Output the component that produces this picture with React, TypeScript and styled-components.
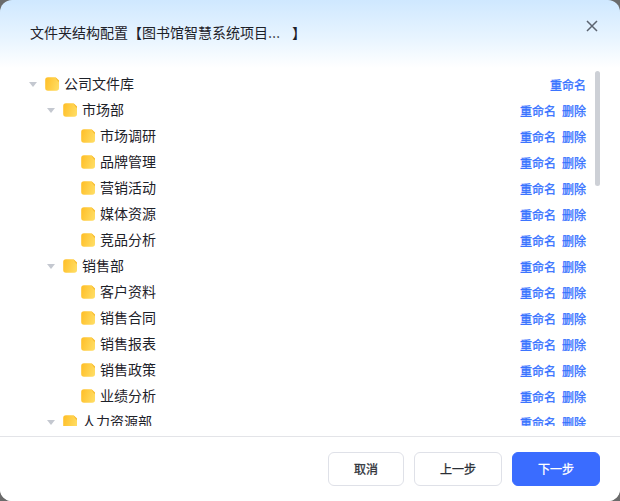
import React from "react";
import styled, { createGlobalStyle } from "styled-components";

const Global = createGlobalStyle`
  html, body { margin: 0; padding: 0; background: #6b6b6b; }
  body { width: 620px; height: 501px; overflow: hidden; font-family: Inter, "Noto Sans CJK SC", sans-serif; }
`;

const Dialog = styled.div`
  width: 620px; height: 501px; border-radius: 12px; overflow: hidden; display: flex; flex-direction: column;
  background: linear-gradient(180deg, #cfe8ff 0px, #e9f5ff 40px, #ffffff 68px);
`;
const Header = styled.div`
  height: 67px; flex: none; display: flex; align-items: flex-start; justify-content: space-between; padding: 23px 20px 0 30px; box-sizing: border-box;
`;
const Title = styled.div`
  font-size: 14px; line-height: 20px; color: #1d2129; font-weight: 400; font-family: Inter, "Noto Sans CJK SC", sans-serif; white-space: pre;
`;
const Close = styled.div`
  width: 16px; height: 16px; color: #5c6470; margin-top: -5px;
`;
const TreeArea = styled.div`
  height: 369px; flex: none; padding: 3px 20px 0 28px; box-sizing: border-box; position: relative; overflow: hidden;
`;
const Clip = styled.div`
  height: 356px; overflow: hidden;
`;
const Row = styled.div<{ $level: number }>`
  height: 26px; display: flex; align-items: center; padding-left: ${p => p.$level * 18}px; padding-right: 14px;
`;
const Caret = styled.div<{ $hidden?: boolean }>`
  width: 0; height: 0; margin: 2px 8px 0 1px; border-left: 4px solid transparent; border-right: 4px solid transparent;
  border-top: 5px solid ${p => (p.$hidden ? "transparent" : "#c4c8d0")};
`;
const FolderIcon = styled.svg`
  flex: none; margin-top: 2px;
`;
const Label = styled.span`
  font-size: 14px; color: #1d2129; margin-left: 5px; flex: 1; font-family: "Noto Sans CJK SC", sans-serif;
`;
const Action = styled.span`
  font-size: 12px; font-weight: 400; -webkit-text-stroke: 0.3px #3370ff; color: #3370ff; margin: 2px 0 0 6px; font-family: "Noto Sans CJK SC", sans-serif;
`;
const Thumb = styled.div`
  position: absolute; right: 20px; top: 4px; width: 5px; height: 115px; border-radius: 3px; background: #cdd0d6;
`;
const Footer = styled.div`
  flex: 1; border-top: 1px solid #e3e4e8; display: flex; justify-content: flex-end; align-items: flex-start; gap: 10px; padding: 15px 20px 0 0; background: #fff;
`;
const Button = styled.button<{ $primary?: boolean; $w: number }>`
  width: ${p => p.$w}px; height: 34px; border-radius: 6px; font-size: 12px; font-weight: 400; cursor: pointer; padding: 0 0 2px;
  font-family: "Noto Sans CJK SC", sans-serif;
  -webkit-text-stroke: 0.3px currentColor;
  border: 1px solid ${p => (p.$primary ? "#3a6cff" : "#dfe1e8")};
  background: ${p => (p.$primary ? "#3a6cff" : "#fff")};
  color: ${p => (p.$primary ? "#fff" : "#2b2f36")};
`;

function Folder() {
  return (
    <FolderIcon width="14" height="14" viewBox="0 0 14 14">
      <defs>
        <linearGradient id="fg" x1="0" y1="0.3" x2="1" y2="0.6">
          <stop offset="0" stopColor="#ffc02a" />
          <stop offset="1" stopColor="#ffdc62" />
        </linearGradient>
      </defs>
      <path d="M3 0.2H10.5L14 3.6V11A2.8 2.8 0 0 1 11.2 13.8H3A2.8 2.8 0 0 1 .2 11V3A2.8 2.8 0 0 1 3 .2Z" fill="url(#fg)" />
      <path d="M10.5 .2L14 3.6V5.2C12.6 4 11.2 2.4 10.5 .2Z" fill="#f7bd36" />
    </FolderIcon>
  );
}

const rows: [number, string, boolean, boolean][] = [
  [0, "公司文件库", true, false],
  [1, "市场部", true, true],
  [2, "市场调研", false, true],
  [2, "品牌管理", false, true],
  [2, "营销活动", false, true],
  [2, "媒体资源", false, true],
  [2, "竞品分析", false, true],
  [1, "销售部", true, true],
  [2, "客户资料", false, true],
  [2, "销售合同", false, true],
  [2, "销售报表", false, true],
  [2, "销售政策", false, true],
  [2, "业绩分析", false, true],
  [1, "人力资源部", true, true],
];

export default function App() {
  return (
    <>
      <Global />
      <Dialog>
        <Header>
          <Title>文件夹结构配置【图书馆智慧系统项目…   】</Title>
          <Close>
            <svg width="16" height="16" viewBox="0 0 16 16" fill="none" stroke="currentColor" strokeWidth="1.5">
              <path d="M3 3L13 13M13 3L3 13" />
            </svg>
          </Close>
        </Header>
        <TreeArea>
          <Clip>
            {rows.map(([l, t, c, d], i) => (
              <Row key={i} $level={l}>
                <Caret $hidden={!c} />
                <Folder />
                <Label>{t}</Label>
                <Action>重命名</Action>
                {d && <Action>删除</Action>}
              </Row>
            ))}
          </Clip>
          <Thumb />
        </TreeArea>
        <Footer>
          <Button $w={76}>取消</Button>
          <Button $w={88}>上一步</Button>
          <Button $w={88} $primary>下一步</Button>
        </Footer>
      </Dialog>
    </>
  );
}
